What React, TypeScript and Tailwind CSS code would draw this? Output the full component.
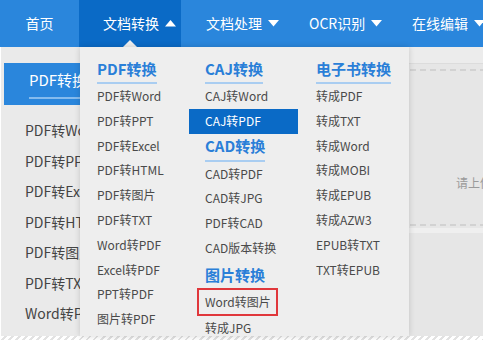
import React from "react";

const Down = () => (
  <svg width="11" height="7" viewBox="0 0 11 7" className="shrink-0">
    <polygon points="0,0 11,0 5.5,6.5" fill="#ffffff" />
  </svg>
);
const Up = () => (
  <svg width="11" height="7" viewBox="0 0 11 7" className="shrink-0">
    <polygon points="0,6.5 11,6.5 5.5,0" fill="#ffffff" />
  </svg>
);

const Heading = ({ text }: { text: string }) => (
  <div className="w-fit">
    <div className="h-[23px] leading-[23px] text-[15px] font-bold text-[#2a7fd8] whitespace-nowrap">{text}</div>
    <div className="mt-[2px] h-[2px] bg-[#a9cdf1]" />
  </div>
);

const Item = ({ text }: { text: string }) => (
  <div className="h-[24.8px] leading-[24.8px] text-[12px] text-[#4a4a4a] whitespace-nowrap">{text}</div>
);

const col1 = ["PDF转Word", "PDF转PPT", "PDF转Excel", "PDF转HTML", "PDF转图片", "PDF转TXT", "Word转PDF", "Excel转PDF", "PPT转PDF", "图片转PDF"];
const col3 = ["转成PDF", "转成TXT", "转成Word", "转成MOBI", "转成EPUB", "转成AZW3", "EPUB转TXT", "TXT转EPUB"];
const cad = ["CAD转PDF", "CAD转JPG", "PDF转CAD", "CAD版本转换"];
const leftList = ["PDF转Word", "PDF转PPT", "PDF转Excel", "PDF转HTML", "PDF转图片", "PDF转TXT", "Word转PDF"];

export default function App() {
  return (
    <div className="relative w-[483px] h-[340px] overflow-hidden bg-[#e9e9e9] font-['Noto_Sans_CJK_SC','Microsoft_YaHei',sans-serif]">
      {/* nav */}
      <div className="flex h-[47px] bg-[#2a86dc] text-white text-[14px] whitespace-nowrap">
        <div className="w-[79px] shrink-0 flex items-center justify-center">首页</div>
        <div className="w-[102px] shrink-0 flex items-center gap-[6px] pl-[24px] bg-[#0a6ac6]">
          <span>文档转换</span>
          <Up />
        </div>
        <div className="w-[103px] shrink-0 flex items-center gap-[6px] pl-[25px]">
          <span>文档处理</span>
          <Down />
        </div>
        <div className="w-[103px] shrink-0 flex items-center gap-[6px] pl-[25px]">
          <span>OCR识别</span>
          <Down />
        </div>
        <div className="w-[103px] shrink-0 flex items-center gap-[6px] pl-[25px]">
          <span>在线编辑</span>
          <Down />
        </div>
      </div>

      {/* body */}
      <div className="flex h-[289px]">
        <div className="w-[200px] shrink-0 pl-[3px] border-l-[1px] border-white bg-[#eaeaea]">
          <div className="mt-[16px] h-[42px] bg-[#2a86dc] pl-[25px] pt-[6px]">
            <div className="h-[22px] leading-[22px] text-[15px] text-white">PDF转换</div>
            <div className="mt-[6px] h-[1.5px] bg-[#84bbee]" />
          </div>
          <div className="mt-[10px] pl-[21px]">
            {leftList.map((t) => (
              <div key={t} className="h-[30.5px] leading-[30.5px] text-[14px] text-[#444444] whitespace-nowrap">{t}</div>
            ))}
          </div>
        </div>
        <div className="flex-1 flex flex-col bg-[#e6e6e6]">
          <div className="h-[17px] bg-[#ececec] border-b border-[#dcdcdc]" />
          <div className="mt-[5px] h-[157px] border-y-2 border-dashed border-[#d2d2d2] flex items-center pl-[256px] pt-[70px] text-[12px] text-[#9a9a9a] whitespace-nowrap">
            请上传文件
          </div>
          <div className="mt-[2px] h-[5px] bg-[#efefef]" />
          <div className="flex-1 bg-[#e6e6e6]" />
        </div>
      </div>
      <div className="h-[4px] bg-[repeating-linear-gradient(135deg,#ffffff_0_3px,#e2e2e2_3px_5px)]" />

      {/* pointer */}
      <svg width="14" height="7" viewBox="0 0 14 7" className="absolute left-[123px] top-[40px]">
        <polygon points="0,7 14,7 7,0" fill="#eeeeee" />
      </svg>

      {/* dropdown */}
      <div className="absolute left-[80px] top-[47px] w-[329px] h-[289px] bg-[#eeeeee] shadow-[0_0_6px_rgba(0,0,0,0.16)] flex pl-[17px] pt-[10px]">
        <div className="w-[108px] shrink-0">
          <Heading text="PDF转换" />
          {col1.map((t) => (
            <Item key={t} text={t} />
          ))}
        </div>
        <div className="w-[111px] shrink-0">
          <Heading text="CAJ转换" />
          <Item text="CAJ转Word" />
          <div className="-ml-[16px] w-[109px] h-[24.8px] leading-[24.8px] pl-[16px] bg-[#0a6ac6] text-[12px] text-white whitespace-nowrap">CAJ转PDF</div>
          <div className="w-fit">
            <div className="h-[23px] leading-[23px] text-[15px] font-bold text-[#2a7fd8] whitespace-nowrap">CAD转换</div>
            <div className="mt-[3px] h-[2px] bg-[#a9cdf1]" />
          </div>
          {cad.map((t) => (
            <Item key={t} text={t} />
          ))}
          <div className="pt-[2px] h-[25px] leading-[23px] text-[15px] font-bold text-[#2a7fd8] whitespace-nowrap">图片转换</div>
          <div className="mt-[2px] -ml-[8px] w-[81px] h-[28px] border-2 border-[#e0373b] pl-[6px] leading-[24px] text-[12px] text-[#4a4a4a] whitespace-nowrap">Word转图片</div>
          <Item text="转成JPG" />
        </div>
        <div className="w-[93px] shrink-0">
          <Heading text="电子书转换" />
          {col3.map((t) => (
            <Item key={t} text={t} />
          ))}
        </div>
      </div>
    </div>
  );
}
